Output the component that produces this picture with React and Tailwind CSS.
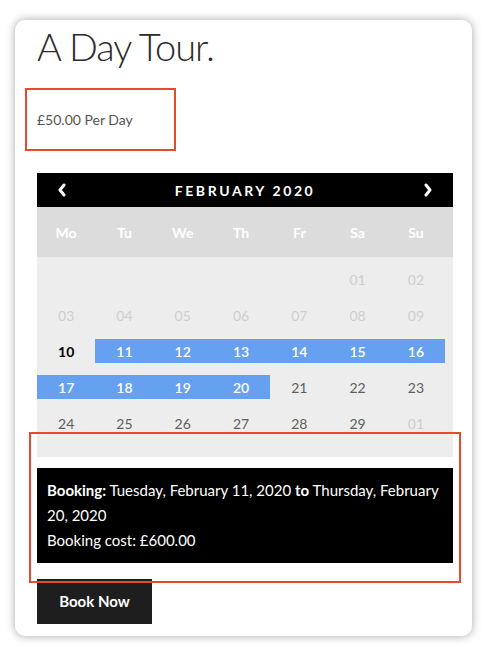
import React from "react";

const days = [
  ["", "", "", "", "", "01", "02"],
  ["03", "04", "05", "06", "07", "08", "09"],
  ["10", "11", "12", "13", "14", "15", "16"],
  ["17", "18", "19", "20", "21", "22", "23"],
  ["24", "25", "26", "27", "28", "29", "01"],
];

function cellClass(r, c, v) {
  if (!v) return "";
  if (r === 0 || r === 1 || (r === 4 && c === 6)) return "text-[#cfcfcf]";
  if (r === 2 && c === 0) return "text-black font-bold";
  if ((r === 2 && c >= 1) || (r === 3 && c <= 3)) return "bg-[#65a1f0] text-white font-semibold";
  return "text-[#5e5e5e]";
}

function Chevron({ dir }) {
  return (
    <svg width="10" height="14" viewBox="0 0 10 14" className="block">
      <polyline
        points={dir === "left" ? "7,2 3,7 7,12" : "3,2 7,7 3,12"}
        fill="none"
        stroke="white"
        strokeWidth="3"
        strokeLinecap="round"
        strokeLinejoin="round"
      />
    </svg>
  );
}

export default function App() {
  const font = { fontFamily: "Lato, 'Noto Sans', sans-serif" };
  return (
    <div className="w-[488px] h-[654px] bg-white pt-[20px] pl-[15px]" style={font}>
      <div className="relative w-[457px] h-[616px] rounded-[10px] bg-white shadow-[0_0_10px_rgba(0,0,0,0.35)] pl-[22px] pr-[19px]">
        <h1 className="text-[38px] leading-[48px] font-light text-[#2b2b2b] pt-[2px] tracking-[-1px]">A Day Tour.</h1>
        <div className="mt-[18px] -ml-[12px] w-[151px] h-[63px] border-2 border-[#e84a30] flex items-center pl-[10px] text-[14px] text-[#555]">
          £50.00 Per Day
        </div>
        <div className="mt-[22px] w-[416px]">
          <div className="h-[34px] bg-black flex items-center justify-between px-[20px] text-white">
            <Chevron dir="left" />
            <span className="text-[14px] font-bold tracking-[2.6px]">FEBRUARY 2020</span>
            <Chevron dir="right" />
          </div>
          <div className="h-[50px] bg-[#dcdcdc] grid grid-cols-[repeat(7,58.3px)] items-center text-white font-bold text-[14px]">
            {["Mo", "Tu", "We", "Th", "Fr", "Sa", "Su"].map((d) => (
              <div key={d} className="text-center">{d}</div>
            ))}
          </div>
          <div className="h-[200px] bg-[#ededed] pt-[10px] flex flex-col gap-[12px]">
            {days.map((row, r) => (
              <div key={r} className="grid grid-cols-[repeat(7,58.3px)] h-[24px]">
                {row.map((v, c) => (
                  <div key={c} className={"flex items-center justify-center text-[14px] " + cellClass(r, c, v)}>
                    {v}
                  </div>
                ))}
              </div>
            ))}
          </div>
          <div className="mt-[11px] bg-black text-white text-[15px] leading-[25px] px-[10px] py-[10px]">
            <div className="whitespace-nowrap">
              <b>Booking:</b> Tuesday, February 11, 2020 <b>to</b> Thursday, February
            </div>
            <div>20, 2020</div>
            <div>Booking cost: £600.00</div>
          </div>
          <button className="mt-[16px] w-[115px] h-[45px] bg-[#1e1e1e] text-white font-bold text-[15px]">
            Book Now
          </button>
        </div>
        <div className="absolute left-[14px] top-[412px] w-[432px] h-[151px] border-2 border-[#e84a30] pointer-events-none" />
      </div>
    </div>
  );
}
